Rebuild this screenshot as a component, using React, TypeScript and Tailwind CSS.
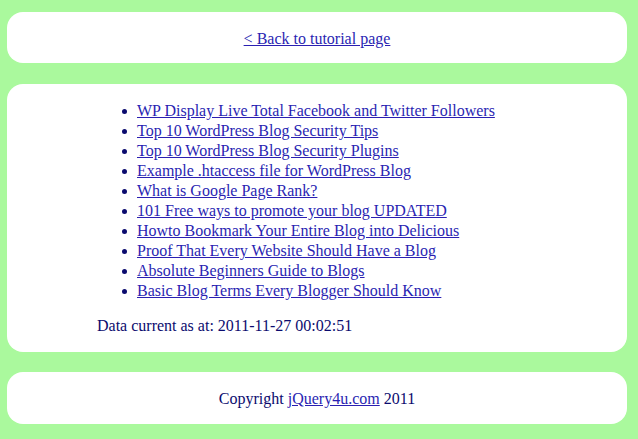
import React from "react";

const items = [
  "WP Display Live Total Facebook and Twitter Followers",
  "Top 10 WordPress Blog Security Tips",
  "Top 10 WordPress Blog Security Plugins",
  "Example .htaccess file for WordPress Blog",
  "What is Google Page Rank?",
  "101 Free ways to promote your blog UPDATED",
  "Howto Bookmark Your Entire Blog into Delicious",
  "Proof That Every Website Should Have a Blog",
  "Absolute Beginners Guide to Blogs",
  "Basic Blog Terms Every Blogger Should Know",
];

export default function App() {
  return (
    <div
      className="min-h-screen bg-[#aaf99d] pt-[12px] pb-[15px] pl-[7px] pr-[11px] text-[16px] leading-[20px] text-[#0b0b6e]"
      style={{ fontFamily: '"Liberation Serif", "Times New Roman", serif' }}
    >
      <div className="bg-white rounded-[16px] pt-[17px] pb-[14px] text-center">
        <a href="#" className="text-[#2a1fb2] underline">
          &lt; Back to tutorial page
        </a>
      </div>

      <div className="bg-white rounded-[16px] mt-[21px] pt-[17px] pb-[16px] pl-[90px]">
        <ul className="pl-[40px]">
          {items.map((t) => (
            <li key={t} className="relative">
              <span className="absolute left-[-15px] top-[8px] w-[5px] h-[5px] rounded-full bg-[#0b0b6e]" />
              <a href="#" className="text-[#2a1fb2] underline">
                {t}
              </a>
            </li>
          ))}
        </ul>
        <div className="mt-[15px]">Data current as at: 2011-11-27 00:02:51</div>
      </div>

      <div className="bg-white rounded-[16px] mt-[20px] pt-[17px] pb-[15px] text-center">
        Copyright{" "}
        <a href="#" className="text-[#2a1fb2] underline">
          jQuery4u.com
        </a>{" "}
        2011
      </div>
    </div>
  );
}
